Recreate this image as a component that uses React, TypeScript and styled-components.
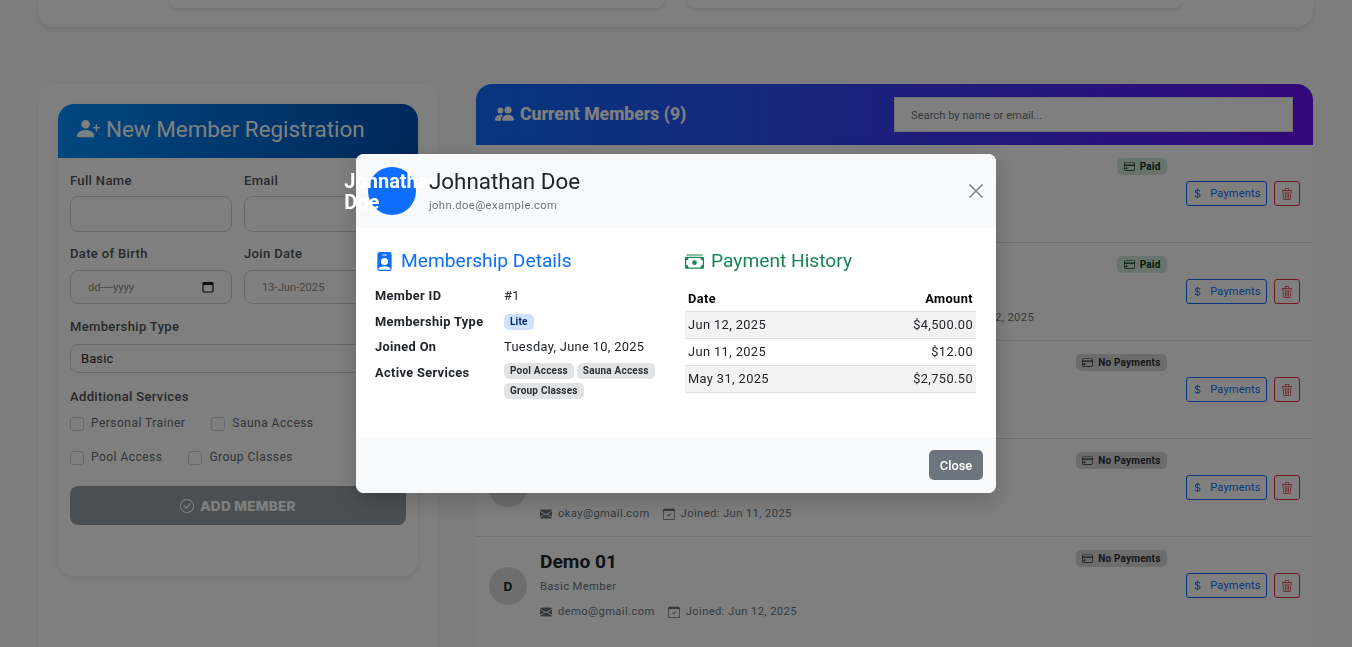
import React from "react";
import styled, { createGlobalStyle } from "styled-components";
import {
  BsPersonPlusFill, BsPeopleFill, BsCheckCircle, BsCreditCard, BsCurrencyDollar, BsTrash3,
  BsEnvelopeFill, BsCalendarCheck, BsPersonBadgeFill, BsCashStack,
} from "react-icons/bs";

const Global = createGlobalStyle`
  html, body { margin: 0; padding: 0; background: #fafafa; }
  body { font-family: Roboto, "Liberation Sans", sans-serif; color: #212529; }
  * { box-sizing: border-box; }
`;

const Page = styled.div`
  height: 647px;
  overflow: hidden;
  padding: 0 39px 0 38px;
`;
const TopCard = styled.div`
  height: 27px;
  background: #fff;
  border-radius: 0 0 16px 16px;
  box-shadow: 0 2px 4px rgba(0,0,0,.1);
  display: flex;
  justify-content: center;
  gap: 23px;
  padding-right: 1px;
`;
const TopInner = styled.div`
  width: 495px;
  height: 8px;
  background: #fff;
  border-radius: 0 0 10px 10px;
  box-shadow: 0 2px 4px rgba(0,0,0,.12);
`;
const Columns = styled.div`
  display: grid;
  grid-template-columns: 400px 837px;
  gap: 38px;
  margin-top: 57px;
`;
const FormShell = styled.div`
  background: #fff;
  border-radius: 16px 16px 0 0;
  padding: 20px;
  height: 600px;
  box-shadow: 0 1px 4px rgba(0,0,0,.05);
`;
const FormCard = styled.div`
  height: 472px;
  border-radius: 16px;
  background: #fff;
  box-shadow: 0 2px 6px rgba(0,0,0,.1);
  overflow: hidden;
`;
const FormHeader = styled.div`
  height: 54px;
  background: linear-gradient(90deg, #008fff, #0050b3);
  color: #fff;
  display: flex;
  align-items: center;
  gap: 6px;
  padding: 0 0 5px 19px;
  font-size: 22.4px;
  svg { width: 23px; height: 23px; }
`;
const FormBody = styled.div`
  padding: 15px 12px 0;
  display: flex;
  flex-direction: column;
`;
const FieldGrid = styled.div`
  display: grid;
  grid-template-columns: 162px 162px;
  column-gap: 12px;
  row-gap: 14px;
`;
const Field = styled.div`
  display: flex;
  flex-direction: column;
`;
const Label = styled.label<{ $mb?: number }>`
  font-size: 13px;
  font-weight: 500;
  letter-spacing: .35px;
  color: #4f5357;
  line-height: 16px;
  margin-bottom: ${(p) => p.$mb ?? 8}px;
`;
const TextBox = styled.div<{ $h?: number }>`
  height: ${(p) => p.$h ?? 36}px;
  border: 1px solid #ced4da;
  border-radius: 8px;
  background: #fff;
  display: flex;
  align-items: center;
  justify-content: space-between;
  padding: 0 17px;
  font-size: 12px;
  color: #8c8c8c;
`;
const DateHint = styled.span`
  font-size: 11.2px;
  color: #8c8c8c;
`;
const PickerIcon = styled.svg`
  width: 12px;
  height: 12px;
  color: #1c1c1c;
`;
const SelectBox = styled(TextBox)`
  height: 29px;
  padding: 0 10px;
  font-size: 13px;
  letter-spacing: .1px;
  color: #2b2b2b;
`;
const WideField = styled(Field)`
  margin-top: 15px;
`;
const ServicesLabel = styled(Label)`
  margin: 16px 0 12px;
`;
const CheckRow = styled.div`
  display: flex;
  gap: 26px;
  margin-bottom: 20px;
  height: 14px;
`;
const CheckItem = styled.span`
  display: flex;
  align-items: flex-start;
  gap: 7px;
  font-size: 12px;
  letter-spacing: .47px;
  color: #666a70;
  line-height: 12px;
`;
const CheckMark = styled.span`
  width: 14px;
  height: 14px;
  border: 1px solid #ced4da;
  border-radius: 3px;
  background: #fff;
`;
const AddButton = styled.div`
  height: 39px;
  margin-top: 1px;
  background: #989fa5;
  border-radius: 8px;
  color: #fff;
  display: flex;
  align-items: center;
  justify-content: center;
  gap: 6px;
  font-family: Inter, sans-serif;
  font-size: 13.5px;
  font-weight: 800;
  letter-spacing: .3px;
  svg { width: 14px; height: 14px; }
`;
const ListCard = styled.div`
  background: #fff;
  height: 600px;
  border-radius: 16px 16px 0 0;
  overflow: hidden;
`;
const ListHeader = styled.div`
  height: 61px;
  background: linear-gradient(90deg, #0d6efd, #6610f2);
  display: flex;
  align-items: center;
  justify-content: space-between;
  padding: 0 20px 0 19px;
`;
const ListTitle = styled.div`
  display: flex;
  align-items: center;
  gap: 6px;
  color: #fff;
  font-size: 17.6px;
  font-weight: 800;
  padding-bottom: 2px;
  svg { width: 19px; height: 19px; }
`;
const SearchBox = styled.div`
  width: 399px;
  height: 35px;
  background: #fff;
  border: 1px solid #dee2e6;
  display: flex;
  align-items: center;
  padding: 1px 0 0 16px;
  font-size: 11.2px;
  color: #6c757d;
`;
const Row = styled.div<{ $first?: boolean }>`
  height: ${(p) => (p.$first ? 97 : 98)}px;
  border-top: ${(p) => (p.$first ? "none" : "1px solid #dee2e6")};
  padding: 0 13px;
  display: flex;
  align-items: center;
  gap: 13px;
`;
const Avatar = styled.div`
  width: 38px;
  height: 38px;
  border-radius: 50%;
  background: #dcdddf;
  display: flex;
  align-items: center;
  justify-content: center;
  font-size: 13.6px;
  font-weight: 700;
  color: #212529;
  flex: none;
`;
const RowInfo = styled.div`
  flex: 1;
  min-width: 0;
  align-self: flex-start;
  padding-top: 13px;
`;
const RowName = styled.div`
  font-size: 19.2px;
  font-weight: 700;
  line-height: 24px;
  color: #212529;
`;
const RowSub = styled.div`
  font-size: 11.2px;
  letter-spacing: .4px;
  color: #6c757d;
  line-height: 14px;
  margin-top: 6px;
`;
const RowMeta = styled.div`
  display: flex;
  align-items: center;
  gap: 13px;
  margin-top: 11px;
  font-size: 11.2px;
  letter-spacing: .4px;
  color: #6c757d;
  line-height: 14px;
  white-space: nowrap;
`;
const MetaItem = styled.span`
  display: flex;
  align-items: center;
  gap: 6px;
  svg { width: 12px; height: 12px; }
`;
const RowSide = styled.div`
  align-self: flex-start;
  padding-top: 13px;
  display: flex;
  flex-direction: column;
  align-items: flex-end;
  flex: none;
`;
const Badge = styled.div<{ $paid: boolean }>`
  height: 17px;
  margin-right: 133px;
  padding: 0 6.5px;
  border-radius: 5px;
  background: ${(p) => (p.$paid ? "#d1e7dd" : "#d8d9db")};
  color: ${(p) => (p.$paid ? "#0a3622" : "#2b2f32")};
  display: flex;
  align-items: center;
  gap: 5px;
  font-size: 10px;
  font-weight: 700;
  letter-spacing: .2px;
  svg { width: 11px; height: 11px; }
`;
const Actions = styled.div`
  display: flex;
  gap: 7px;
  margin-top: 6px;
`;
const PayButton = styled.div`
  width: 81px;
  height: 25px;
  border: 1px solid #0d6efd;
  border-radius: 3px;
  color: #0d6efd;
  display: flex;
  align-items: center;
  justify-content: center;
  gap: 7px;
  font-size: 11px;
  letter-spacing: .2px;
  svg { width: 11px; height: 11px; }
`;
const TrashButton = styled.div`
  width: 26px;
  height: 25px;
  border: 1px solid #dc3545;
  border-radius: 3px;
  color: #dc3545;
  display: flex;
  align-items: center;
  justify-content: center;
  svg { width: 12px; height: 12px; }
`;

const Overlay = styled.div`
  position: fixed;
  inset: 0;
  background: rgba(0,0,0,.5);
`;
const Modal = styled.div`
  position: fixed;
  left: 356px;
  top: 154px;
  width: 640px;
  height: 339px;
  background: #fff;
  border-radius: 8px;
  box-shadow: 0 8px 24px rgba(0,0,0,.2);
  display: flex;
  flex-direction: column;
`;
const ModalHeader = styled.div`
  height: 74px;
  background: #f8f9fa;
  border-radius: 8px 8px 0 0;
  display: flex;
  align-items: center;
  padding: 0 12px;
  flex: none;
`;
const ModalAvatar = styled.div`
  width: 48px;
  height: 48px;
  border-radius: 50%;
  background: #0d6efd;
  color: #fff;
  font-size: 20px;
  font-weight: 700;
  line-height: 21px;
  padding-top: 1px;
  display: flex;
  align-items: center;
  justify-content: center;
  flex: none;
`;
const AvatarText = styled.span`
  flex: none;
  width: min-content;
`;
const HeaderText = styled.div`
  margin-left: 13px;
  padding-bottom: 2px;
  flex: 1;
`;
const ModalName = styled.div`
  font-size: 22.4px;
  line-height: 26px;
  color: #212529;
`;
const ModalEmail = styled.div`
  font-size: 11.2px;
  line-height: 14px;
  letter-spacing: .4px;
  color: #6c757d;
  margin-top: 5px;
`;
const CloseIcon = styled.svg`
  width: 16px;
  height: 16px;
  color: #7d7f81;
`;
const ModalBody = styled.div`
  flex: 1;
  display: grid;
  grid-template-columns: 291px 291px;
  gap: 19px;
  padding: 21px 20px 0 19px;
`;
const Section = styled.div`
  display: flex;
  flex-direction: column;
`;
const SectionTitle = styled.div<{ $c: string }>`
  display: flex;
  align-items: center;
  gap: 7px;
  font-size: 19.2px;
  line-height: 24px;
  color: ${(p) => p.$c};
  svg { width: 19px; height: 19px; flex: none; }
`;
const DetailGrid = styled.div`
  display: grid;
  grid-template-columns: 129px 1fr;
  row-gap: 9.67px;
  margin-top: 15px;
  font-size: 12.8px;
  line-height: 16px;
`;
const DetailKey = styled.div`
  font-weight: 700;
  color: #212529;
  letter-spacing: .35px;
`;
const DetailVal = styled.div`
  letter-spacing: .35px;
  color: #212529;
`;
const Pills = styled.div<{ $lift?: boolean }>`
  display: flex;
  flex-wrap: wrap;
  gap: 4px 3px;
  margin-top: ${(p) => (p.$lift ? -2 : 0)}px;
`;
const Pill = styled.span<{ $blue?: boolean }>`
  height: 16px;
  padding: 0 6px;
  border-radius: 5px;
  background: ${(p) => (p.$blue ? "#cfe2ff" : "#e2e3e5")};
  color: ${(p) => (p.$blue ? "#052c65" : "#2b2f32")};
  font-size: 10px;
  font-weight: 700;
  letter-spacing: .2px;
  line-height: 16px;
`;
const PayTable = styled.table`
  border-collapse: collapse;
  width: 100%;
  margin-top: 13px;
  font-size: 12.8px;
  letter-spacing: .4px;
`;
const Th = styled.th<{ $right?: boolean }>`
  text-align: ${(p) => (p.$right ? "right" : "left")};
  font-weight: 700;
  color: #000;
  padding: 0 3px;
  height: 25px;
  border-bottom: 1px solid #dee2e6;
`;
const Td = styled.td<{ $right?: boolean }>`
  text-align: ${(p) => (p.$right ? "right" : "left")};
  padding: 0 3px;
  height: 27px;
  border-bottom: 1px solid #dee2e6;
  color: #212529;
`;
const Tr = styled.tr<{ $striped?: boolean }>`
  background: ${(p) => (p.$striped ? "#f2f2f2" : "#fff")};
`;
const ModalFooter = styled.div`
  height: 56px;
  background: #f8f9fa;
  border-radius: 0 0 8px 8px;
  display: flex;
  align-items: center;
  justify-content: flex-end;
  padding-right: 13px;
  flex: none;
`;
const CloseButton = styled.div`
  width: 54px;
  height: 30px;
  background: #6c757d;
  border-radius: 5px;
  color: #fff;
  font-size: 12.8px;
  font-weight: 500;
  display: flex;
  align-items: center;
  justify-content: center;
`;

const members = [
  { i: "J", name: "Johnathan Doe", sub: "Lite Member", email: "john.doe@example.com", joined: "Jun 10, 2025", paid: true },
  { i: "A", name: "Alex Carter", sub: "Premium Member", email: "alex.carter.membership.account.office.portal.u@example.com", joined: "Jun 12, 2025", paid: true },
  { i: "T", name: "Test User", sub: "Basic Member", email: "test@gmail.com", joined: "Jun 11, 2025", paid: false },
  { i: "O", name: "Okay", sub: "Basic Member", email: "okay@gmail.com", joined: "Jun 11, 2025", paid: false },
  { i: "D", name: "Demo 01", sub: "Basic Member", email: "demo@gmail.com", joined: "Jun 12, 2025", paid: false },
];

export default function App() {
  return (
    <>
      <Global />
      <Page>
        <TopCard>
          <TopInner />
          <TopInner />
        </TopCard>
        <Columns>
          <FormShell>
            <FormCard>
              <FormHeader><BsPersonPlusFill />New Member Registration</FormHeader>
              <FormBody>
                <FieldGrid>
                  <Field><Label $mb={7}>Full Name</Label><TextBox /></Field>
                  <Field><Label $mb={7}>Email</Label><TextBox /></Field>
                  <Field>
                    <Label>Date of Birth</Label>
                    <TextBox $h={34}>
                      <DateHint>dd----yyyy</DateHint>
                      <PickerIcon viewBox="0 0 12 12" fill="none" stroke="currentColor">
                        <rect x="1" y="1.5" width="10" height="9.5" rx="1" strokeWidth="1.2" />
                        <rect x="1" y="1.5" width="10" height="2.5" fill="currentColor" strokeWidth="0" />
                      </PickerIcon>
                    </TextBox>
                  </Field>
                  <Field><Label>Join Date</Label><TextBox $h={34}><DateHint>13-Jun-2025</DateHint></TextBox></Field>
                </FieldGrid>
                <WideField><Label $mb={9}>Membership Type</Label><SelectBox>Basic</SelectBox></WideField>
                <ServicesLabel>Additional Services</ServicesLabel>
                <CheckRow>
                  <CheckItem><CheckMark />Personal Trainer</CheckItem>
                  <CheckItem><CheckMark />Sauna Access</CheckItem>
                </CheckRow>
                <CheckRow>
                  <CheckItem><CheckMark />Pool Access</CheckItem>
                  <CheckItem><CheckMark />Group Classes</CheckItem>
                </CheckRow>
                <AddButton><BsCheckCircle />ADD MEMBER</AddButton>
              </FormBody>
            </FormCard>
          </FormShell>
          <ListCard>
            <ListHeader>
              <ListTitle><BsPeopleFill />Current Members (9)</ListTitle>
              <SearchBox>Search by name or email...</SearchBox>
            </ListHeader>
            {members.map((m, idx) => (
              <Row key={m.name} $first={idx === 0}>
                <Avatar>{m.i}</Avatar>
                <RowInfo>
                  <RowName>{m.name}</RowName>
                  <RowSub>{m.sub}</RowSub>
                  <RowMeta>
                    <MetaItem><BsEnvelopeFill />{m.email}</MetaItem>
                    <MetaItem><BsCalendarCheck />Joined: {m.joined}</MetaItem>
                  </RowMeta>
                </RowInfo>
                <RowSide>
                  <Badge $paid={m.paid}><BsCreditCard />{m.paid ? "Paid" : "No Payments"}</Badge>
                  <Actions>
                    <PayButton><BsCurrencyDollar />Payments</PayButton>
                    <TrashButton><BsTrash3 /></TrashButton>
                  </Actions>
                </RowSide>
              </Row>
            ))}
          </ListCard>
        </Columns>
      </Page>
      <Overlay />
      <Modal>
        <ModalHeader>
          <ModalAvatar><AvatarText>Johnathan Doe</AvatarText></ModalAvatar>
          <HeaderText>
            <ModalName>Johnathan Doe</ModalName>
            <ModalEmail>john.doe@example.com</ModalEmail>
          </HeaderText>
          <CloseIcon viewBox="0 0 16 16" fill="none" stroke="currentColor" strokeWidth="1.5">
            <path d="M1.5 1.5 14.5 14.5M14.5 1.5 1.5 14.5" />
          </CloseIcon>
        </ModalHeader>
        <ModalBody>
          <Section>
            <SectionTitle $c="#0d6efd"><BsPersonBadgeFill />Membership Details</SectionTitle>
            <DetailGrid>
              <DetailKey>Member ID</DetailKey><DetailVal>#1</DetailVal>
              <DetailKey>Membership Type</DetailKey><DetailVal><Pills><Pill $blue>Lite</Pill></Pills></DetailVal>
              <DetailKey>Joined On</DetailKey><DetailVal>Tuesday, June 10, 2025</DetailVal>
              <DetailKey>Active Services</DetailKey>
              <DetailVal><Pills $lift><Pill>Pool Access</Pill><Pill>Sauna Access</Pill><Pill>Group Classes</Pill></Pills></DetailVal>
            </DetailGrid>
          </Section>
          <Section>
            <SectionTitle $c="#198754"><BsCashStack />Payment History</SectionTitle>
            <PayTable>
              <thead><tr><Th>Date</Th><Th $right>Amount</Th></tr></thead>
              <tbody>
                <Tr $striped><Td>Jun 12, 2025</Td><Td $right>$4,500.00</Td></Tr>
                <Tr><Td>Jun 11, 2025</Td><Td $right>$12.00</Td></Tr>
                <Tr $striped><Td>May 31, 2025</Td><Td $right>$2,750.50</Td></Tr>
              </tbody>
            </PayTable>
          </Section>
        </ModalBody>
        <ModalFooter><CloseButton>Close</CloseButton></ModalFooter>
      </Modal>
    </>
  );
}
